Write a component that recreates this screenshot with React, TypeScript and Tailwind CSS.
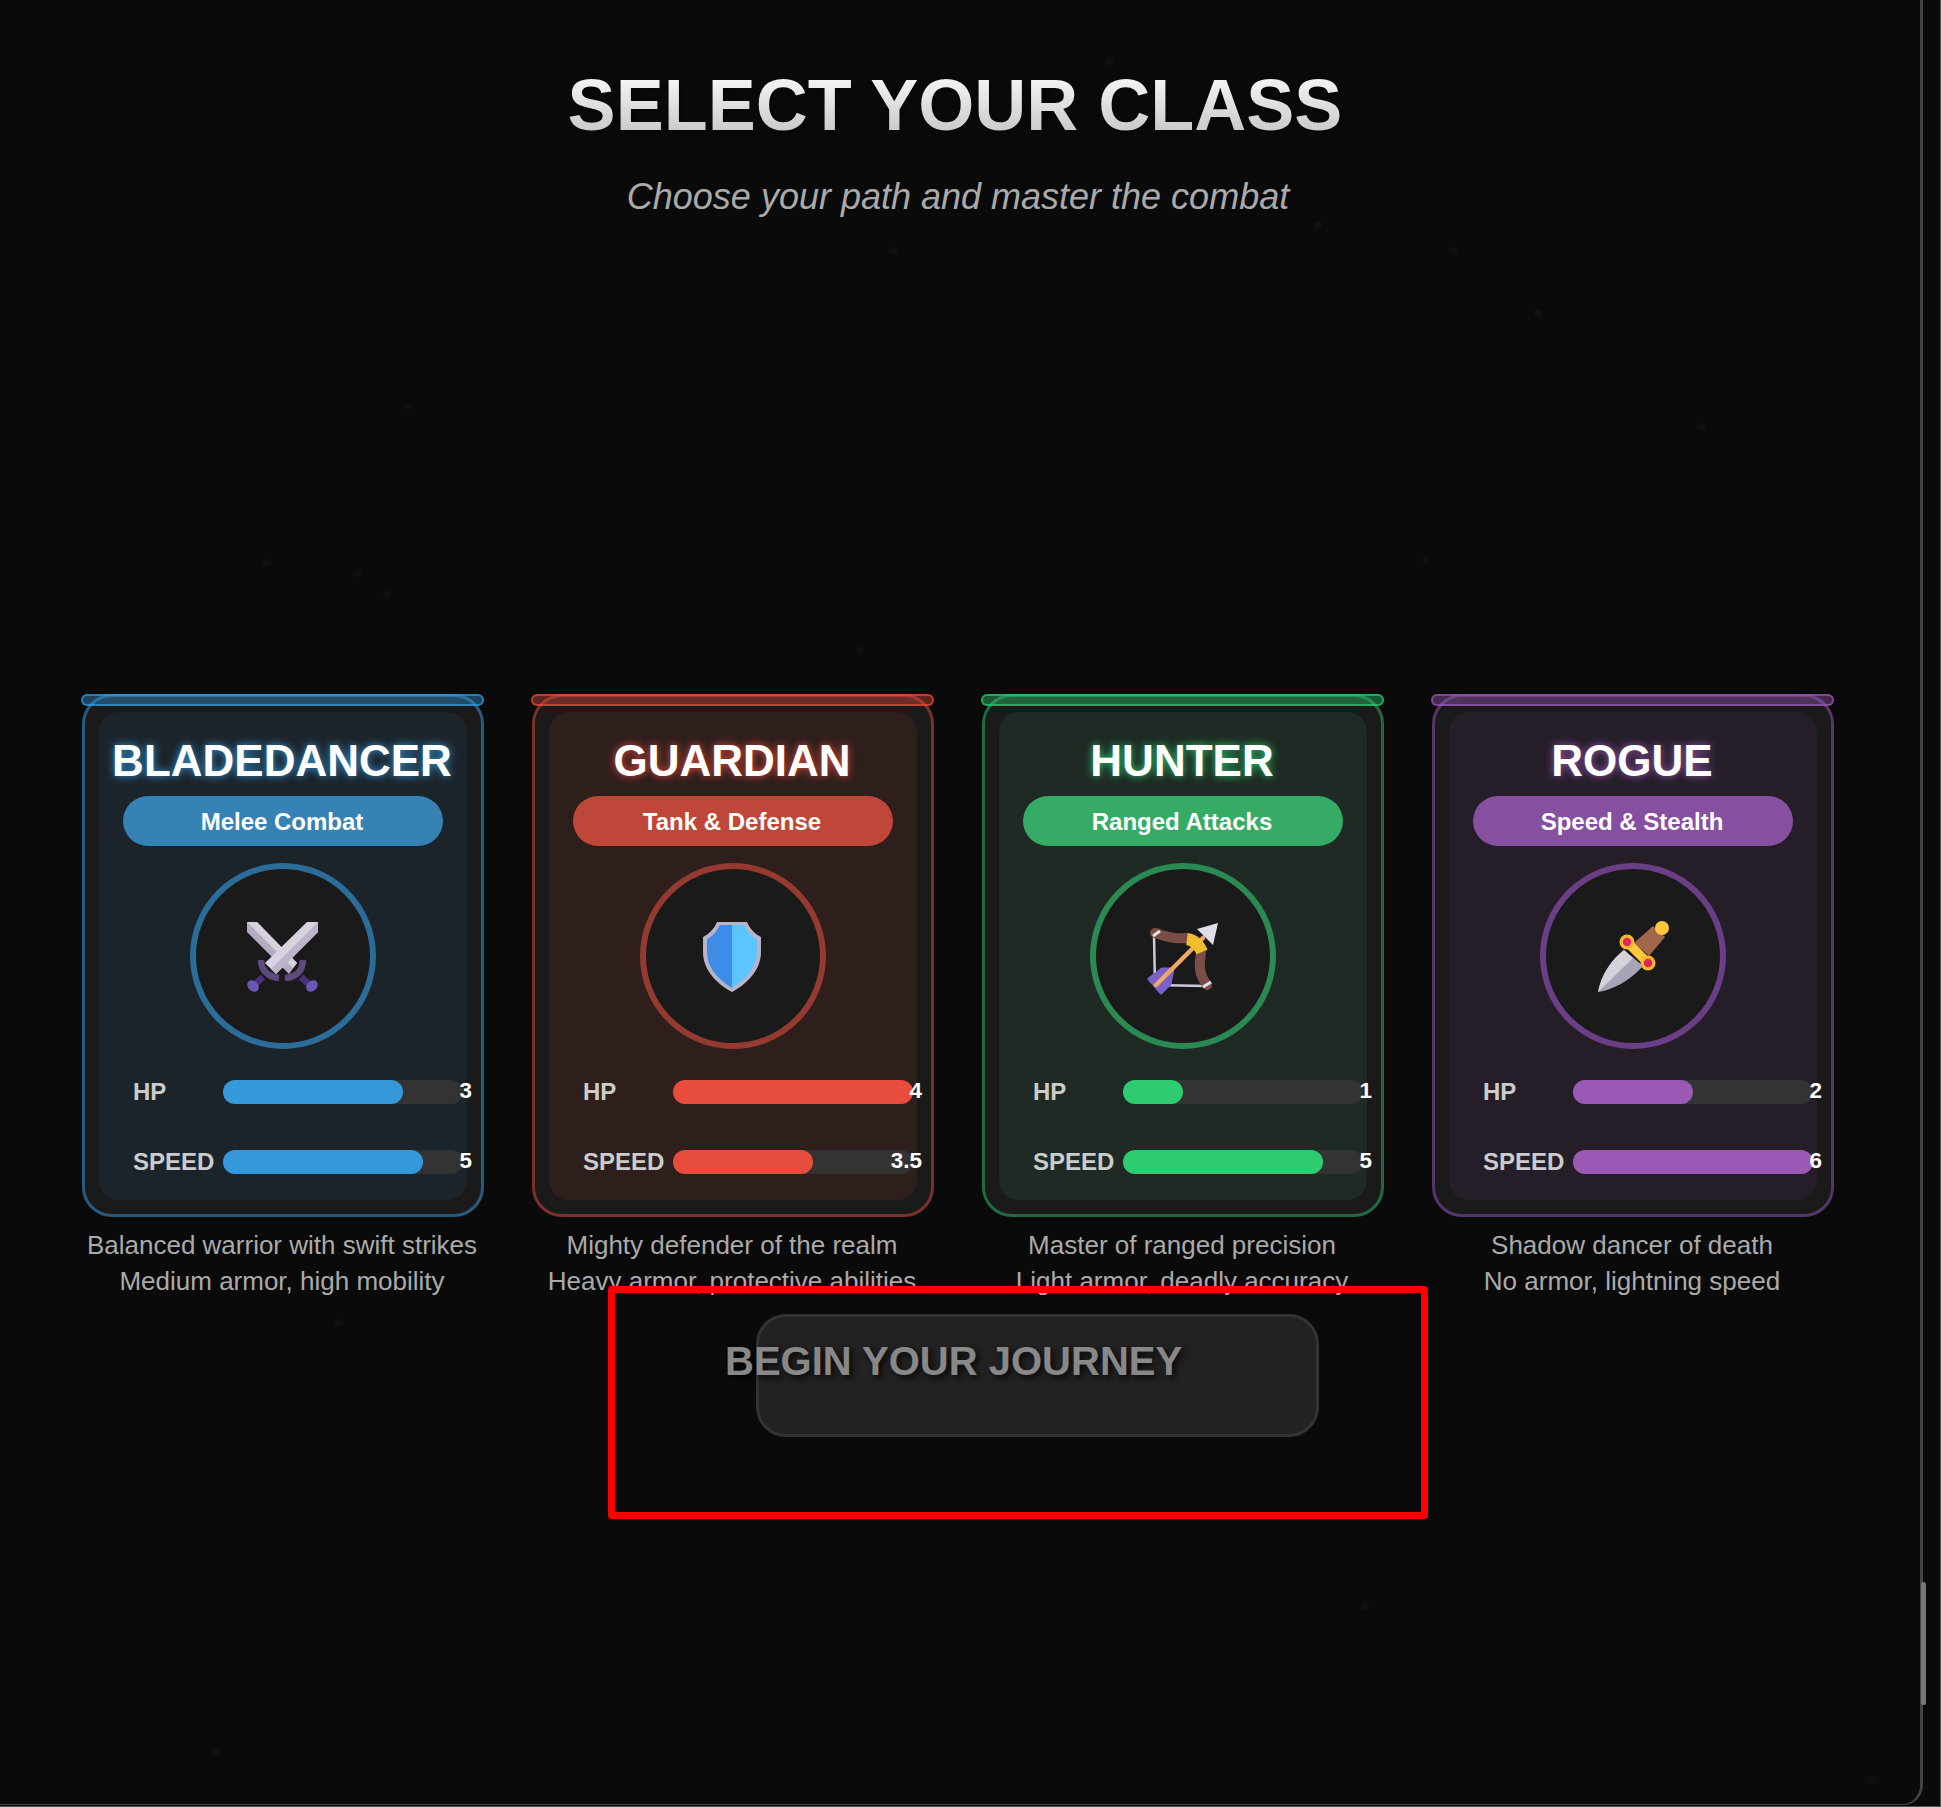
import React from 'react';

const specks = [
  [1106, 58], [1314, 221], [404, 402], [262, 559], [355, 569], [383, 590], [1422, 556], [1534, 309],
  [1451, 247], [890, 247], [1698, 423], [856, 646], [213, 1748], [334, 1319], [906, 1393], [1361, 1603],
  [1868, 1777], [1704, 1240],
];

const SwordsIcon = () => (
  <svg viewBox="0 0 72 72" className="w-full h-full">
    <path d="M16 57L6 66" stroke="#4a2f7a" strokeWidth="6.5" />
    <path d="M54 57L64 66" stroke="#4a2f7a" strokeWidth="6.5" />
    <ellipse cx="6" cy="66" rx="6.5" ry="5" fill="#6b55b5" transform="rotate(45 6 66)" />
    <ellipse cx="65" cy="66" rx="6.5" ry="5" fill="#6b55b5" transform="rotate(-45 65 66)" />
    <path d="M0 2H10L50 43L42 54L0 12Z" fill="#b5abc2" />
    <path d="M0 2H10L50 43L46 48Z" fill="#d6d1dc" />
    <path d="M14 40C14 50 21 57 32 58" fill="none" stroke="#5f4a7d" strokeWidth="6.5" />
    <path d="M56 40C56 50 50 57 38 58" fill="none" stroke="#5f4a7d" strokeWidth="6.5" />
    <path d="M60 2H71V12L29 54L18 43Z" fill="#d8d3de" />
    <path d="M71 2V12L29 54L24 49Z" fill="#bdb3ca" />
  </svg>
);

const ShieldIcon = () => (
  <svg viewBox="0 0 72 72" className="w-full h-full">
    <path d="M20 2H50C53 9 58 14 64 17V32C64 50 50 64 35 72C20 64 6 50 6 32V17C12 14 17 9 20 2Z" fill="#b8b4c8" />
    <path d="M35 5H23C20 11 15 17 10 19V32C10 48 22 60 35 68Z" fill="#3f8ce8" />
    <path d="M35 5H47C50 11 55 17 60 19V32C60 48 48 60 35 68Z" fill="#5cc4ff" />
  </svg>
);

const BowIcon = () => (
  <svg viewBox="0 0 72 75" className="w-full h-[75px]">
    <path d="M7 15L8 65L59 66" fill="none" stroke="#cfc8dc" strokeWidth="2.5" />
    <path d="M2 59L15 49H26L23 64L14 73Z" fill="#7a61c8" stroke="#7a61c8" strokeWidth="3" strokeLinejoin="round" />
    <path d="M9 65L56 18" stroke="#f0a868" strokeWidth="4.5" strokeLinecap="round" />
    <path d="M50 9L71 3L66 25Z" fill="#e0dce8" />
    <path d="M8 13C14 14 24 20 40 18" fill="none" stroke="#7a4e46" strokeWidth="10" strokeLinecap="round" />
    <path d="M54 33C53 42 50 52 60 65" fill="none" stroke="#7a4e46" strokeWidth="10" strokeLinecap="round" />
    <path d="M40 19C47 20 52 25 55 32" fill="none" stroke="#f0bc30" strokeWidth="12" />
    <path d="M6 16L13 11" stroke="#e4e0ea" strokeWidth="3" />
    <path d="M56 67L64 62" stroke="#e4e0ea" strokeWidth="3" />
  </svg>
);

const DaggerIcon = () => (
  <svg viewBox="0 0 72 72" className="w-full h-full">
    <path d="M1 72C4 55 15 39 27 30L46 46C33 61 15 70 1 72Z" fill="#a9a3b8" />
    <path d="M1 72C4 55 15 39 27 30L36 38Z" fill="#d6d2dc" />
    <path d="M37 23L56 6L68 17L52 36Z" fill="#a0674a" />
    <circle cx="65" cy="8" r="7" fill="#ffc83d" />
    <path d="M30 22L51 43" stroke="#ffc83d" strokeWidth="9" />
    <circle cx="30" cy="22" r="7.5" fill="#f9b82a" />
    <circle cx="51" cy="43" r="7.5" fill="#f9b82a" />
    <circle cx="30" cy="22" r="4.2" fill="#e0245e" />
    <circle cx="51" cy="43" r="4.2" fill="#e0245e" />
  </svg>
);

const classes = [
  {
    name: 'BLADEDANCER', role: 'Melee Combat', hp: 3, speed: 5, speedLabel: '5',
    lines: ['Balanced warrior with swift strikes', 'Medium armor, high mobility'],
    icon: <SwordsIcon />,
    card: 'border-[#275a7e]', bar: 'border-[#3498db]/70 bg-[#3498db]/40', panel: 'bg-[#1c242b]',
    title: '[text-shadow:0_0_8px_#3498db]', pill: 'bg-[#3782b5]', ring: 'border-[#2c6c99]', fill: 'bg-[#3498db]',
  },
  {
    name: 'GUARDIAN', role: 'Tank & Defense', hp: 4, speed: 3.5, speedLabel: '3.5',
    lines: ['Mighty defender of the realm', 'Heavy armor, protective abilities'],
    icon: <ShieldIcon />,
    card: 'border-[#7a3129]', bar: 'border-[#e74c3c]/70 bg-[#e74c3c]/40', panel: 'bg-[#2e1f1d]',
    title: '[text-shadow:0_0_8px_#e74c3c]', pill: 'bg-[#be4739]', ring: 'border-[#943a31]', fill: 'bg-[#e74c3c]',
  },
  {
    name: 'HUNTER', role: 'Ranged Attacks', hp: 1, speed: 5, speedLabel: '5',
    lines: ['Master of ranged precision', 'Light armor, deadly accuracy'],
    icon: <BowIcon />,
    card: 'border-[#22693f]', bar: 'border-[#2ecc71]/70 bg-[#2ecc71]/40', panel: 'bg-[#1e2a23]',
    title: '[text-shadow:0_0_8px_#2ecc71]', pill: 'bg-[#35ab66]', ring: 'border-[#2a8a52]', fill: 'bg-[#2ecc71]',
  },
  {
    name: 'ROGUE', role: 'Speed & Stealth', hp: 2, speed: 6, speedLabel: '6',
    lines: ['Shadow dancer of death', 'No armor, lightning speed'],
    icon: <DaggerIcon />,
    card: 'border-[#553469]', bar: 'border-[#9b59b6]/70 bg-[#9b59b6]/40', panel: 'bg-[#251e29]',
    title: '[text-shadow:0_0_8px_#9b59b6]', pill: 'bg-[#864f9f]', ring: 'border-[#6a3f86]', fill: 'bg-[#9b59b6]',
  },
];

const StatRow: React.FC<{ label: string; value: string; percent: number; fill: string }> = ({ label, value, percent, fill }) => (
  <div className="flex items-center h-6">
    <span className="w-[90px] shrink-0 text-2xl font-bold text-[#cccccc] leading-none">{label}</span>
    <div className="relative flex-1 h-6 rounded-xl bg-[#333333]">
      <div className={`h-full rounded-xl ${fill}`} style={{ width: `${percent}%` }}></div>
      <span className="absolute right-[-9px] top-[-1px] text-[22.4px] font-bold text-white leading-6">{value}</span>
    </div>
  </div>
);

export default function App() {
  return (
    <div className="relative w-[1941px] h-[1807px] overflow-hidden bg-[#0a0a0a] border-r border-b border-[#555555] font-['Liberation_Sans',Arial,sans-serif]">
      <div className="relative w-[1923px] h-[1805px] border-r-[3px] border-b-[1px] border-[#444444] rounded-br-[20px]">
        {specks.map(([x, y], i) => (
          <span key={i} className="absolute w-2 h-2 rounded-full bg-[#101010]" style={{ left: x, top: y }}></span>
        ))}

        <header className="relative pt-[69px] text-center">
          <h1 className="pr-[10px] text-[72px] font-bold leading-none">
            <span className="bg-linear-to-b from-white to-[#c0c0c0] bg-clip-text text-transparent drop-shadow-[2px_2px_4px_rgba(0,0,0,0.5)]">SELECT YOUR CLASS</span>
          </h1>
          <p className="mt-[38px] pr-[4px] text-[36px] italic leading-none text-[#aaaaaa]">Choose your path and master the combat</p>
        </header>

        <div className="relative mt-[479px] flex gap-12 pl-[82px]">
          {classes.map((c) => (
            <div key={c.name} className="w-[402px] shrink-0">
              <div className={`relative h-[523px] rounded-[30px] border-[3px] bg-[#1a1a1a] px-[14px] pt-[15px] pb-[14px] ${c.card}`}>
                <div className={`absolute left-[-4px] right-[-3px] top-[-3px] h-3 rounded-md border-2 ${c.bar}`}></div>
                <div className={`h-full rounded-[20px] ${c.panel}`}>
                  <div className="flex flex-col items-center pt-[26.5px]">
                    <h2 className={`pr-[2px] text-[44px] font-bold leading-none text-white ${c.title}`}>{c.name}</h2>
                    <div className={`mt-[13.5px] flex h-[50px] w-80 items-center justify-center rounded-[25px] pt-[1px] pr-[2px] text-2xl font-bold text-white ${c.pill}`}>{c.role}</div>
                    <div className={`mt-[17px] flex h-[186px] w-[186px] items-center justify-center rounded-full border-[6px] bg-[#1a1a1a] ${c.ring}`}>
                      <div className="h-[72px] w-[72px]">{c.icon}</div>
                    </div>
                  </div>
                  <div className="mt-[31px] flex flex-col gap-[46px] pl-[34px] pr-[4px]">
                    <StatRow label="HP" value={String(c.hp)} percent={(c.hp / 4) * 100} fill={c.fill} />
                    <StatRow label="SPEED" value={c.speedLabel} percent={(c.speed / 6) * 100} fill={c.fill} />
                  </div>
                </div>
              </div>
              <p className="mt-[10px] pr-[2px] text-center text-[26px] leading-[36px] text-[#aaaaaa]">
                {c.lines[0]}
                <br />
                {c.lines[1]}
              </p>
            </div>
          ))}
        </div>

        <div className="relative mt-[15px] pl-[756px]">
          <button className="relative block h-[123px] w-[563px] rounded-[30px] border-[3px] border-[#333333] bg-[#222222]">
            <span className="absolute left-[-34px] top-6 whitespace-nowrap text-[40px] font-bold leading-none text-[#888888] [text-shadow:3px_3px_6px_rgba(0,0,0,0.8)]">BEGIN YOUR JOURNEY</span>
          </button>
        </div>

        <div className="absolute left-[608px] top-[1286px] h-[233px] w-[820px] rounded-sm border-[7px] border-[#ff0000]"></div>
      </div>
      <div className="absolute left-[1921px] top-[1582px] h-[123px] w-[5px] rounded-full bg-[#777777]"></div>
    </div>
  );
}
